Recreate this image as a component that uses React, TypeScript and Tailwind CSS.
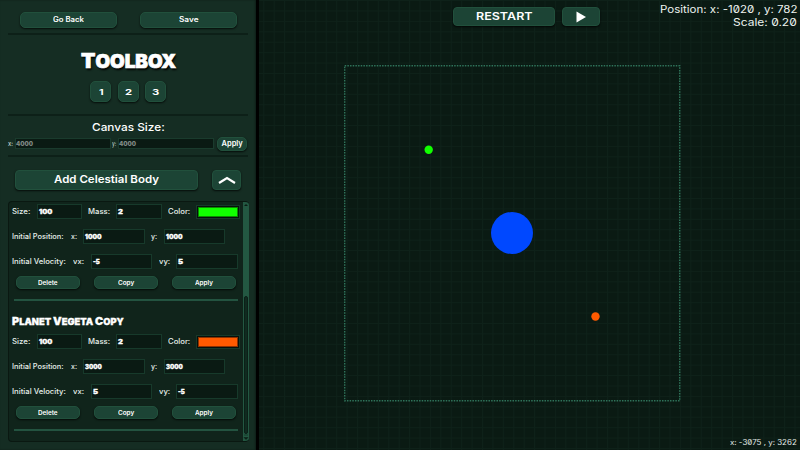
import React, { useLayoutEffect, useRef } from "react";

function Fit({ className, children }: { className: string; children: React.ReactNode }) {
  const box = useRef<HTMLSpanElement>(null);
  const line = useRef<HTMLSpanElement>(null);
  useLayoutEffect(() => {
    const fit = () => {
      if (box.current && line.current) {
        line.current.style.transform = "scaleX(" + box.current.offsetWidth / line.current.offsetWidth + ")";
      }
    };
    fit();
    document.fonts?.ready.then(fit);
  }, []);
  return (
    <span ref={box} className={"block shrink-0 text-left whitespace-pre " + className}>
      <span ref={line} className="inline-block origin-left align-top">
        {children}
      </span>
    </span>
  );
}

function Button({ className, children }: { className: string; children: React.ReactNode }) {
  return (
    <button
      className={
        "flex shrink-0 items-center justify-center border border-[#21503c] bg-[#1c4435] text-white shadow-[0_1px_2px_rgba(0,0,0,0.75)] " +
        className
      }
    >
      {children}
    </button>
  );
}

function Field({ className, text, children }: { className: string; text: string; children: string }) {
  return (
    <div
      className={
        "flex h-[15px] shrink-0 items-center border border-[#173a2b] bg-[#0a1a13] pl-[1px] text-[6px] leading-[8px] font-black text-white [-webkit-text-stroke:0.3px_white] " +
        className
      }
    >
      <Fit className={text}>{children}</Fit>
    </div>
  );
}

function Rule({ className }: { className: string }) {
  return <div className={"h-[2px] shrink-0 bg-[#0d2018] " + className} />;
}

type BodyProps = { swatch: string; pos: string; vx: string; vy: string; vxW: string; vyW: string };

function BodyForm({ swatch, pos, vx, vy, vxW, vyW }: BodyProps) {
  return (
    <div className="shrink-0 text-[7px] leading-[9px] font-medium text-[#e8f1ec]">
      <div className="flex h-[15px] items-center pl-[3px]">
        <Fit className="w-[18px]">Size:</Fit>
        <Field className="ml-[7px] w-[45px]" text="w-[13px]">100</Field>
        <Fit className="ml-[6px] w-[22px]">Mass:</Fit>
        <Field className="ml-[6px] w-[46px]" text="w-[5px]">2</Field>
        <Fit className="ml-[6px] w-[22px]">Color:</Fit>
        <div className="ml-[6px] h-[14px] w-[44px] shrink-0 border border-[#173a2b] bg-[#07100c] p-[1px]">
          <div className={"h-full w-full border border-black/45 " + swatch} />
        </div>
      </div>
      <div className="mt-[10px] flex h-[15px] items-center pl-[3px]">
        <Fit className="w-[52px]">Initial Position:</Fit>
        <Fit className="ml-[7px] w-[6px]">x:</Fit>
        <Field className="ml-[6px] w-[62px]" text="w-[17px]">{pos}</Field>
        <Fit className="ml-[6px] w-[6px]">y:</Fit>
        <Field className="ml-[7px] w-[61px]" text="w-[17px]">{pos}</Field>
      </div>
      <div className="mt-[10px] flex h-[15px] items-center pl-[3px]">
        <Fit className="w-[54px]">Initial Velocity:</Fit>
        <Fit className="ml-[7px] w-[11px]">vx:</Fit>
        <Field className="ml-[7px] w-[61px]" text={vxW}>{vx}</Field>
        <Fit className="ml-[7px] w-[11px]">vy:</Fit>
        <Field className="ml-[6px] w-[62px]" text={vyW}>{vy}</Field>
      </div>
      <div className="mt-[7px] flex h-[13px] gap-[14px] pl-[7px]">
        <Button className="w-[64px] rounded-[5px] text-[6px] font-semibold"><Fit className="w-[20px]">Delete</Fit></Button>
        <Button className="w-[64px] rounded-[5px] text-[6px] font-semibold"><Fit className="w-[16px]">Copy</Fit></Button>
        <Button className="w-[64px] rounded-[5px] text-[6px] font-semibold"><Fit className="w-[18px]">Apply</Fit></Button>
      </div>
      <div className="mt-[10px] ml-[5px] h-[2px] w-[224px] bg-[#235340]" />
    </div>
  );
}

function Toolbox() {
  return (
    <aside className="flex h-full w-[259px] shrink-0 flex-col border-r-[3px] border-black bg-[#152d23] shadow-[inset_-1px_0_2px_rgba(0,0,0,0.35)]">
      <div className="mt-[12px] ml-[20px] flex h-[16px] shrink-0 gap-[23px] text-[7px] font-semibold">
        <Button className="w-[97px] rounded-[5px]"><Fit className="w-[31px]">Go Back</Fit></Button>
        <Button className="w-[97px] rounded-[5px]"><Fit className="w-[20px]">Save</Fit></Button>
      </div>
      <Rule className="mt-[5px] ml-[8px] w-[240px]" />
      <h1 className="mt-[13px] ml-[81px] h-[26px] shrink-0 text-[20.5px] leading-[26px] font-black text-white [-webkit-text-stroke:0.7px_white] [text-shadow:1px_2px_2px_#000]">
        <Fit className="w-[95px]">T<span className="text-[18.5px] uppercase">oolbox</span></Fit>
      </h1>
      <div className="mt-[7px] ml-[90px] flex h-[21px] shrink-0 gap-[6.5px] text-[8px] font-bold">
        <Button className="w-[21px] rounded-[5px]"><Fit className="w-[4px]">1</Fit></Button>
        <Button className="w-[21px] rounded-[5px]"><Fit className="w-[7px]">2</Fit></Button>
        <Button className="w-[21px] rounded-[5px]"><Fit className="w-[7px]">3</Fit></Button>
      </div>
      <Rule className="mt-[12px] ml-[8px] w-[240px]" />
      <div className="mt-[4px] ml-[92px] h-[15px] shrink-0 text-[11px] leading-[15px] font-medium text-white">
        <Fit className="w-[73px]">Canvas Size:</Fit>
      </div>
      <div className="mt-[1px] ml-[8px] flex h-[15px] shrink-0 items-center text-[6px] leading-[8px] text-[#dce6e1]">
        <Fit className="w-[5px]">x:</Fit>
        <div className="ml-[2px] flex h-[11px] w-[96px] shrink-0 items-center border border-[#1a3b2d] bg-[#0a1a13] font-black text-[#7d8782]">
          <Fit className="w-[17px]">4000</Fit>
        </div>
        <Fit className="ml-[1px] w-[4px]">y:</Fit>
        <div className="ml-[2px] flex h-[11px] w-[96px] shrink-0 items-center border border-[#1a3b2d] bg-[#0a1a13] font-black text-[#7d8782]">
          <Fit className="w-[17px]">4000</Fit>
        </div>
        <Button className="ml-[3px] h-[14px] w-[30px] rounded-[5px] text-[7.5px] font-semibold"><Fit className="w-[21px]">Apply</Fit></Button>
      </div>
      <Rule className="mt-[4px] ml-[8px] w-[240px]" />
      <div className="mt-[13px] ml-[15px] flex h-[20px] shrink-0 gap-[14px] text-[10.5px] font-semibold">
        <Button className="w-[183px] rounded-[4px]"><Fit className="w-[105px]">Add Celestial Body</Fit></Button>
        <Button className="w-[29px] rounded-[4px]">
          <svg className="h-[8px] w-[18px]" viewBox="0 0 18 8" fill="none" stroke="white" strokeWidth="2.2">
            <path d="M1 7 9 2l8 5" />
          </svg>
        </Button>
      </div>
      <section className="mt-[11px] ml-[8px] flex h-[241px] w-[241px] shrink-0 justify-between overflow-hidden rounded-[4px] border border-r-0 border-[#0a1811] bg-[#10241b]">
        <div className="flex flex-col pt-[2px]">
          <BodyForm swatch="bg-[#11ff00]" pos="1000" vx="-5" vy="5" vxW="w-[7px]" vyW="w-[5px]" />
          <h2 className="mt-[14px] mb-[5px] ml-[3px] h-[14px] shrink-0 text-[10.5px] leading-[14px] font-black text-white [-webkit-text-stroke:0.3px_white]">
            <Fit className="w-[112px]">
              P<span className="text-[9px] uppercase">lanet </span>V<span className="text-[9px] uppercase">egeta </span>C<span className="text-[9px] uppercase">opy</span>
            </Fit>
          </h2>
          <BodyForm swatch="bg-[#ff5a00]" pos="3000" vx="5" vy="-5" vxW="w-[5px]" vyW="w-[7px]" />
        </div>
        <div className="flex w-[6px] shrink-0 flex-col items-center bg-[#235842]">
          <svg className="h-[6px] w-[6px] shrink-0" viewBox="0 0 6 6"><path d="M1 4 3 2l2 2z" fill="#0b1c14" /></svg>
          <div className="h-[88px] shrink-0" />
          <div className="w-[4px] flex-1 rounded-[2px] border border-[#0b2018] bg-[#102b20]" />
          <svg className="h-[7px] w-[6px] shrink-0" viewBox="0 0 6 7"><path d="M1 1h4M1 3.5 3 5.5l2-2z" fill="#0b1c14" stroke="#0b1c14" strokeWidth="0.5" /></svg>
        </div>
      </section>
    </aside>
  );
}

function Space() {
  return (
    <main className="relative h-full flex-1 overflow-hidden bg-[#0a1a13]">
      <svg className="block h-[450px] w-[541px]" viewBox="259 0 541 450">
        <defs>
          <pattern id="grid" x="357" y="73" width="10.4167" height="10.4167" patternUnits="userSpaceOnUse">
            <path d="M0.5 0V10.42M0 0.5H10.42" stroke="#0e2119" strokeWidth="1" />
          </pattern>
        </defs>
        <rect x="259" y="0" width="541" height="450" fill="url(#grid)" />
        <rect x="344.7" y="65.8" width="335" height="335" fill="none" stroke="#2f735a" strokeWidth="1.4" strokeDasharray="1.5 1.17" />
        <circle cx="428.7" cy="149.8" r="4.2" fill="#11ff00" />
        <circle cx="512" cy="233" r="21" fill="#0048ff" />
        <circle cx="595.5" cy="316.5" r="4.2" fill="#ff5a00" />
      </svg>
      <div className="absolute top-[7px] left-[194px] flex h-[19px] gap-[7px]">
        <Button className="w-[102px] rounded-[4px] text-[10.5px] font-semibold"><Fit className="w-[56px]">RESTART</Fit></Button>
        <Button className="w-[38px] rounded-[4px]">
          <svg className="h-[12px] w-[10px]" viewBox="0 0 10 12"><path d="M0.5 0.5 10 6 0.5 11.5z" fill="white" /></svg>
        </Button>
      </div>
      <div className="absolute top-[3px] right-[3px] flex flex-col items-end text-[10.5px] leading-[13px] text-[#eef3f0] slashed-zero">
        <Fit className="w-[137px]">Position: x: -1020 , y: 782</Fit>
        <Fit className="w-[64px]">Scale: 0.20</Fit>
      </div>
      <div className="absolute right-[3px] bottom-[2px] text-[7px] leading-[10px] text-[#e4ebe7] slashed-zero">
        <Fit className="w-[67px]">x: -3075 , y: 3262</Fit>
      </div>
    </main>
  );
}

export default function App() {
  return (
    <div className="flex h-[450px] w-[800px] overflow-hidden bg-black font-['Inter','Liberation_Sans',sans-serif]">
      <Toolbox />
      <Space />
    </div>
  );
}
